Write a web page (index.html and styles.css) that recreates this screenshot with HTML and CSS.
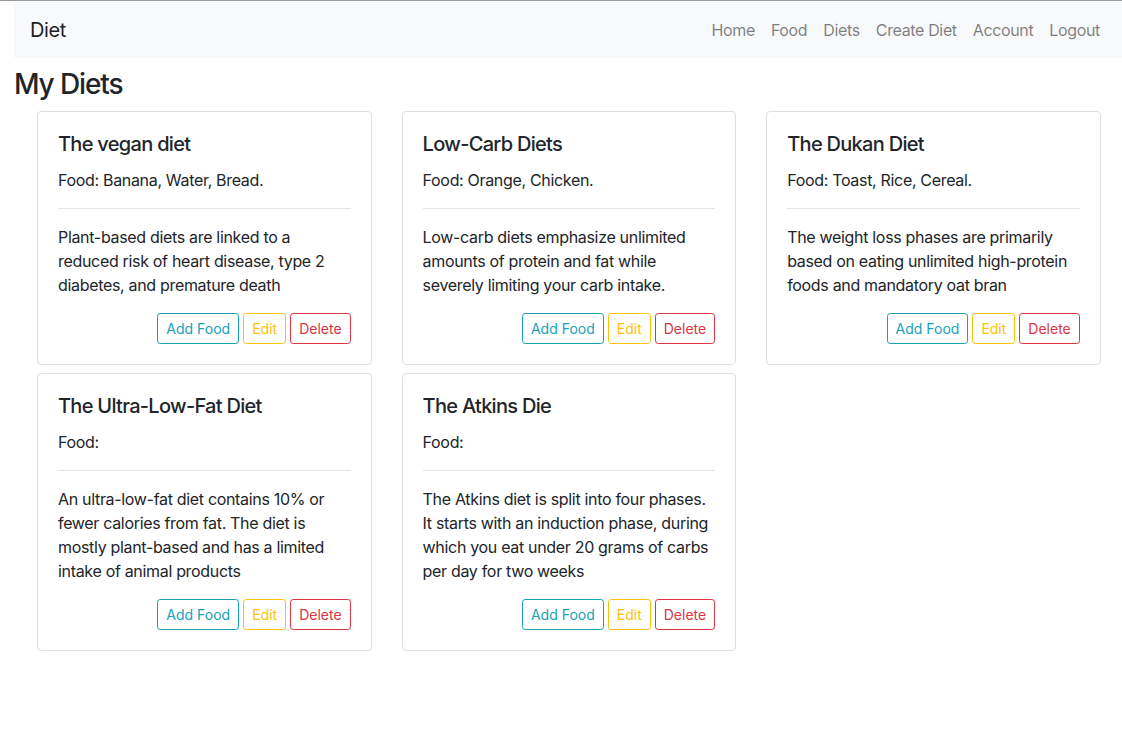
FILE: index.html
```html
<!DOCTYPE html>
<html>
<head>
<meta charset="utf-8">
<title>Diet</title>
<link rel="stylesheet" href="styles.css">
</head>
<body>
<div class="page">
  <nav class="navbar">
    <a class="brand" href="#">Diet</a>
    <ul class="nav">
      <li><a href="#">Home</a></li>
      <li><a href="#">Food</a></li>
      <li><a href="#">Diets</a></li>
      <li><a href="#">Create Diet</a></li>
      <li><a href="#">Account</a></li>
      <li><a href="#">Logout</a></li>
    </ul>
  </nav>
  <h3 class="title">My Diets</h3>
  <div class="grid">
    <div class="card">
      <h5 class="card-title">The vegan diet</h5>
      <p class="food">Food: Banana, Water, Bread.</p>
      <hr>
      <p class="desc">Plant-based diets are linked to a reduced risk of heart disease, type 2 diabetes, and premature death</p>
      <div class="actions">
        <a class="btn info" href="#">Add Food</a>
        <a class="btn warn" href="#">Edit</a>
        <a class="btn danger" href="#">Delete</a>
      </div>
    </div>
    <div class="card">
      <h5 class="card-title">Low-Carb Diets</h5>
      <p class="food">Food: Orange, Chicken.</p>
      <hr>
      <p class="desc">Low-carb diets emphasize unlimited amounts of protein and fat while severely limiting your carb intake.</p>
      <div class="actions">
        <a class="btn info" href="#">Add Food</a>
        <a class="btn warn" href="#">Edit</a>
        <a class="btn danger" href="#">Delete</a>
      </div>
    </div>
    <div class="card">
      <h5 class="card-title">The Dukan Diet</h5>
      <p class="food">Food: Toast, Rice, Cereal.</p>
      <hr>
      <p class="desc">The weight loss phases are primarily based on eating unlimited high-protein foods and mandatory oat bran</p>
      <div class="actions">
        <a class="btn info" href="#">Add Food</a>
        <a class="btn warn" href="#">Edit</a>
        <a class="btn danger" href="#">Delete</a>
      </div>
    </div>
    <div class="card">
      <h5 class="card-title">The Ultra-Low-Fat Diet</h5>
      <p class="food">Food:</p>
      <hr>
      <p class="desc">An ultra-low-fat diet contains 10% or fewer calories from fat. The diet is mostly plant-based and has a limited intake of animal products</p>
      <div class="actions">
        <a class="btn info" href="#">Add Food</a>
        <a class="btn warn" href="#">Edit</a>
        <a class="btn danger" href="#">Delete</a>
      </div>
    </div>
    <div class="card">
      <h5 class="card-title">The Atkins Die</h5>
      <p class="food">Food:</p>
      <hr>
      <p class="desc">The Atkins diet is split into four phases. It starts with an induction phase, during which you eat under 20 grams of carbs per day for two weeks</p>
      <div class="actions">
        <a class="btn info" href="#">Add Food</a>
        <a class="btn warn" href="#">Edit</a>
        <a class="btn danger" href="#">Delete</a>
      </div>
    </div>
  </div>
</div>
</body>
</html>
```

FILE: styles.css
```css
* { box-sizing: border-box; }
html, body { margin: 0; padding: 0; }
body {
  font-family: Inter, "Noto Sans", "Liberation Sans", sans-serif;
  font-size: 16px;
  line-height: 1.5;
  color: #212529;
  background: #fff;
  border-top: 1px solid #9c9c9c;
  letter-spacing: -0.02em;
}
a { text-decoration: none; }
.page {
  padding: 1px 0 0 14px;
}
.navbar {
  display: flex;
  align-items: center;
  justify-content: space-between;
  height: 56px;
  padding: 0 16px;
  background: #f8f9fa;
}
.brand {
  font-size: 20px;
  color: rgba(0,0,0,.9);
  line-height: 30px;
  letter-spacing: -0.02em;
}
.nav {
  display: flex;
  list-style: none;
  margin: 0;
  padding: 0;
}
.nav a {
  display: block;
  padding: 8px 8px;
  color: rgba(0,0,0,.5);
  letter-spacing: -0.022em;
}
.nav li:last-child a { padding-right: 6px; }
.title {
  font-size: 28px;
  font-weight: 500;
  line-height: 1.2;
  margin: 10px 0 9px 0;
  letter-spacing: -0.04em;
}
.grid {
  display: grid;
  grid-template-columns: repeat(3, 334.6px);
  column-gap: 30px;
  row-gap: 8px;
  margin-left: 23px;
}
.card {
  border: 1px solid rgba(0,0,0,.125);
  border-radius: 4px;
  padding: 20px;
  display: flex;
  flex-direction: column;
}
.card-title {
  font-size: 20px;
  font-weight: 500;
  line-height: 1.2;
  margin: 0 0 12px 0;
  letter-spacing: -0.035em;
}
.food { margin: 0; }
hr {
  border: 0;
  border-top: 1px solid rgba(0,0,0,.1);
  margin: 16px 0;
  height: 0;
}
.desc { margin: 0 0 16px 0; }
.actions {
  display: flex;
  justify-content: flex-end;
  gap: 4px;
  margin-top: auto;
}
.btn {
  display: inline-block;
  font-size: 14px;
  line-height: 21px;
  padding: 4px 8px;
  border: 1px solid;
  border-radius: 3.2px;
  background: transparent;
  letter-spacing: 0;
}
.info { color: #17a2b8; border-color: #17a2b8; }
.warn { color: #ffc107; border-color: #ffc107; }
.danger { color: #dc3545; border-color: #dc3545; }
```
